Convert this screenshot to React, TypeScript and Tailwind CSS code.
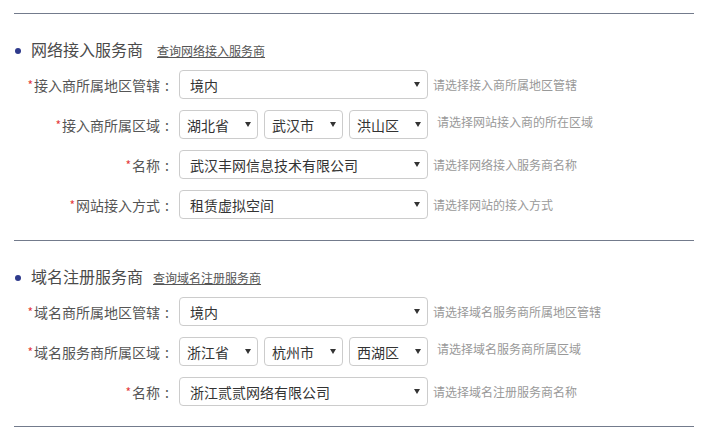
import React from 'react';

const font = { fontFamily: '"Noto Sans CJK SC", "Noto Sans", sans-serif' };

const Arrow = () => (
  <svg width="6" height="5" viewBox="0 0 6 5" className="shrink-0">
    <path d="M0 0 H6 L3 5 Z" fill="#333" />
  </svg>
);

const Select = ({ value, wide }: { value: string; wide?: boolean }) => (
  <div
    className={`flex h-[29px] items-center justify-between rounded-[4px] border border-[#cccccc] bg-white ${
      wide ? 'w-[249px] pl-[10px] pr-[7px]' : 'w-[79px] pl-[7px] pr-[6px]'
    }`}
  >
    <span className="text-[14px] leading-none text-[#333]">{value}</span>
    <Arrow />
  </div>
);

type Row = { label: string; values: string[]; hint: string };

const FormRow = ({ row }: { row: Row }) => (
  <div className="flex h-[29px] items-center">
    <div className="flex w-[160px] items-center justify-end text-[14px] leading-none text-[#555]">
      <span className="mr-[1px] text-[12px] text-[#e4393c]">*</span>
      <span>{row.label}</span>
      <span className="inline-block w-[14px] text-center">:</span>
    </div>
    <div className="ml-[5px] flex gap-[6px]">
      {row.values.length === 1 ? (
        <Select value={row.values[0]} wide />
      ) : (
        row.values.map((v) => <Select key={v} value={v} />)
      )}
    </div>
    <span
      className={`text-[12px] leading-none text-[#999] ${
        row.values.length > 1 ? 'ml-[9px] -mt-[6px]' : 'ml-[5px]'
      }`}
    >
      {row.hint}
    </span>
  </div>
);

const Section = ({ title, link, linkGap, rows }: { title: string; link: string; linkGap: string; rows: Row[] }) => (
  <div>
    <div className="mt-[25px] flex h-[20px] items-end">
      <span className="mb-[5px] ml-[1px] h-[6px] w-[6px] rounded-full bg-[#2e3a8c]" />
      <span className="ml-[10px] text-[16px] leading-[20px] text-[#4a4a4a]">{title}</span>
      <a className={`${linkGap} mb-[1px] text-[12px] leading-[14px] text-[#555] underline`}>{link}</a>
    </div>
    <div className="mt-[11px] flex flex-col gap-[11px]">
      {rows.map((r) => (
        <FormRow key={r.label} row={r} />
      ))}
    </div>
  </div>
);

export default function App() {
  return (
    <div className="h-[437px] w-[717px] bg-white pt-[13px]" style={font}>
      <div className="ml-[14px] w-[680px]">
        <div className="border-t border-[#737b8c]" />
        <Section
          title="网络接入服务商"
          link="查询网络接入服务商"
          linkGap="ml-[14px]"
          rows={[
            { label: '接入商所属地区管辖', values: ['境内'], hint: '请选择接入商所属地区管辖' },
            { label: '接入商所属区域', values: ['湖北省', '武汉市', '洪山区'], hint: '请选择网站接入商的所在区域' },
            { label: '名称', values: ['武汉丰网信息技术有限公司'], hint: '请选择网络接入服务商名称' },
            { label: '网站接入方式', values: ['租赁虚拟空间'], hint: '请选择网站的接入方式' },
          ]}
        />
        <div className="mt-[21px] border-t border-[#737b8c]" />
        <Section
          title="域名注册服务商"
          link="查询域名注册服务商"
          linkGap="ml-[10px]"
          rows={[
            { label: '域名商所属地区管辖', values: ['境内'], hint: '请选择域名服务商所属地区管辖' },
            { label: '域名服务商所属区域', values: ['浙江省', '杭州市', '西湖区'], hint: '请选择域名服务商所属区域' },
            { label: '名称', values: ['浙江贰贰网络有限公司'], hint: '请选择域名注册服务商名称' },
          ]}
        />
        <div className="mt-[20px] border-t border-[#737b8c]" />
      </div>
    </div>
  );
}
